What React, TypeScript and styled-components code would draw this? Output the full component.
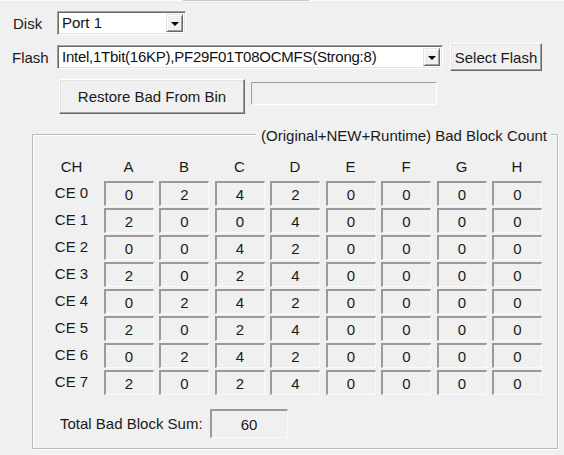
import React from 'react';
import styled, { createGlobalStyle } from 'styled-components';

const GlobalStyle = createGlobalStyle`
  html, body {
    margin: 0;
    padding: 0;
    background: #f0f0f0;
  }
  body {
    font-family: "Liberation Sans", Arial, sans-serif;
    font-size: 15px;
    color: #111;
  }
`;

const Page = styled.div`
  width: 564px;
  height: 455px;
  background: #f0f0f0;
  box-sizing: border-box;
  overflow: hidden;
  position: relative;
`;

const TopStrip = styled.div`
  height: 2px;
  background: #f8f8f8;
  border-bottom: 1px solid #e6e6e6;
  display: flex;
`;

const TabEdge = styled.div`
  margin-left: 183px;
  width: 126px;
  height: 1px;
  background: #c8c8c8;
`;

const Row = styled.div<{ $top: number; $left: number; $height: number }>`
  display: flex;
  align-items: center;
  margin-top: ${(p) => p.$top}px;
  padding-left: ${(p) => p.$left}px;
  height: ${(p) => p.$height}px;
`;

const Label = styled.span<{ $width: number }>`
  width: ${(p) => p.$width}px;
  white-space: nowrap;
  color: #1a1a1a;
`;

const Combo = styled.div<{ $width: number; $height: number }>`
  width: ${(p) => p.$width}px;
  height: ${(p) => p.$height}px;
  box-sizing: border-box;
  display: flex;
  align-items: stretch;
  background: #fff;
  border-style: solid;
  border-width: 1px;
  border-color: #a0a0a0 #fff #fff #a0a0a0;
  box-shadow: inset 1px 1px 0 #696969, inset -1px -1px 0 #e3e3e3;
  padding: 2px;
`;

const ComboText = styled.span<{ $tight?: boolean }>`
  flex: 1;
  padding-left: 2px;
  line-height: 17px;
  white-space: nowrap;
  overflow: hidden;
  letter-spacing: ${(p) => (p.$tight ? '-0.25px' : '0')};
`;

const DropButton = styled.div`
  width: 17px;
  box-sizing: border-box;
  background: #f0f0f0;
  border-style: solid;
  border-width: 1px;
  border-color: #e3e3e3 #696969 #696969 #e3e3e3;
  box-shadow: inset 1px 1px 0 #fff, inset -1px -1px 0 #a0a0a0;
  display: flex;
  align-items: center;
  justify-content: center;
`;

const Arrow = styled.span`
  width: 0;
  height: 0;
  border-left: 4px solid transparent;
  border-right: 4px solid transparent;
  border-top: 4px solid #000;
  margin-top: 1px;
`;

const Button = styled.div<{ $width: number; $height: number; $gap?: number }>`
  width: ${(p) => p.$width}px;
  height: ${(p) => p.$height}px;
  margin-left: ${(p) => p.$gap ?? 0}px;
  box-sizing: border-box;
  display: flex;
  align-items: center;
  justify-content: center;
  background: #f0f0f0;
  border-style: solid;
  border-width: 1px;
  border-color: #fff #696969 #696969 #fff;
  box-shadow: inset -1px -1px 0 #a0a0a0, inset 1px 1px 0 #e3e3e3;
  white-space: nowrap;
  color: #1a1a1a;
`;

const TextField = styled.div`
  width: 186px;
  height: 23px;
  margin-left: 6px;
  align-self: flex-start;
  margin-top: 3px;
  box-sizing: border-box;
  border-style: solid;
  border-width: 1px;
  border-color: #a0a0a0 #fff #fff #a0a0a0;
`;

const Group = styled.div`
  position: relative;
  margin: 20px 0 0 32px;
  width: 526px;
  height: 315px;
  box-sizing: border-box;
  border: 1px solid #b9b9b9;
  box-shadow: inset 1px 1px 0 #fff, 1px 1px 0 #fff;
  padding: 19px 0 0 12px;
`;

const GroupTitle = styled.span`
  position: absolute;
  top: -8px;
  right: 6px;
  padding: 0 4px 0 5px;
  background: #f0f0f0;
  line-height: 18px;
  white-space: nowrap;
  color: #1a1a1a;
`;

const Grid = styled.div`
  display: grid;
  grid-template-columns: 53px repeat(8, 50px);
  grid-template-rows: 25px repeat(8, 25px);
  column-gap: 5.5px;
  row-gap: 2px;
`;

const HeadCell = styled.div`
  display: flex;
  align-items: center;
  justify-content: center;
  margin-bottom: 1px;
  color: #1a1a1a;
`;

const RowLabel = styled.div`
  display: flex;
  align-items: center;
  justify-content: center;
  padding-bottom: 2px;
  color: #1a1a1a;
`;

const Cell = styled.div<{ $width?: number; $height?: number }>`
  box-sizing: border-box;
  width: ${(p) => (p.$width ? `${p.$width}px` : 'auto')};
  height: ${(p) => (p.$height ? `${p.$height}px` : 'auto')};
  display: flex;
  align-items: center;
  justify-content: center;
  border-style: solid;
  border-width: 2px 1px 1px 2px;
  border-color: #9a9a9a #fafafa #fafafa #9a9a9a;
  color: #1a1a1a;
`;

const TotalRow = styled.div`
  display: flex;
  align-items: center;
  margin-top: 14px;
  padding-left: 15px;
  gap: 7px;
  color: #1a1a1a;
`;

const columns = ['A', 'B', 'C', 'D', 'E', 'F', 'G', 'H'];

const data: number[][] = [
  [0, 2, 4, 2, 0, 0, 0, 0],
  [2, 0, 0, 4, 0, 0, 0, 0],
  [0, 0, 4, 2, 0, 0, 0, 0],
  [2, 0, 2, 4, 0, 0, 0, 0],
  [0, 2, 4, 2, 0, 0, 0, 0],
  [2, 0, 2, 4, 0, 0, 0, 0],
  [0, 2, 4, 2, 0, 0, 0, 0],
  [2, 0, 2, 4, 0, 0, 0, 0],
];

const total = data.reduce((s, r) => s + r.reduce((a, b) => a + b, 0), 0);

export default function App() {
  return (
    <Page>
      <GlobalStyle />
      <TopStrip>
        <TabEdge />
      </TopStrip>

      <Row $top={8} $left={13} $height={24}>
        <Label $width={44}>Disk</Label>
        <Combo $width={129} $height={24}>
          <ComboText>Port 1</ComboText>
          <DropButton>
            <Arrow />
          </DropButton>
        </Combo>
      </Row>

      <Row $top={8} $left={12} $height={28}>
        <Label $width={45}>Flash</Label>
        <Combo $width={386} $height={24}>
          <ComboText $tight>Intel,1Tbit(16KP),PF29F01T08OCMFS(Strong:8)</ComboText>
          <DropButton>
            <Arrow />
          </DropButton>
        </Combo>
        <Button $width={92} $height={28} $gap={7}>
          Select Flash
        </Button>
      </Row>

      <Row $top={8} $left={59} $height={35}>
        <Button $width={186} $height={35}>
          Restore Bad From Bin
        </Button>
        <TextField />
      </Row>

      <Group>
        <GroupTitle>(Original+NEW+Runtime) Bad Block Count</GroupTitle>
        <Grid>
          <HeadCell>CH</HeadCell>
          {columns.map((c) => (
            <HeadCell key={c}>{c}</HeadCell>
          ))}
          {data.map((row, i) => (
            <React.Fragment key={i}>
              <RowLabel>CE {i}</RowLabel>
              {row.map((v, j) => (
                <Cell key={j}>{v}</Cell>
              ))}
            </React.Fragment>
          ))}
        </Grid>
        <TotalRow>
          <span>Total Bad Block Sum:</span>
          <Cell $width={78} $height={29}>
            {total}
          </Cell>
        </TotalRow>
      </Group>
    </Page>
  );
}
